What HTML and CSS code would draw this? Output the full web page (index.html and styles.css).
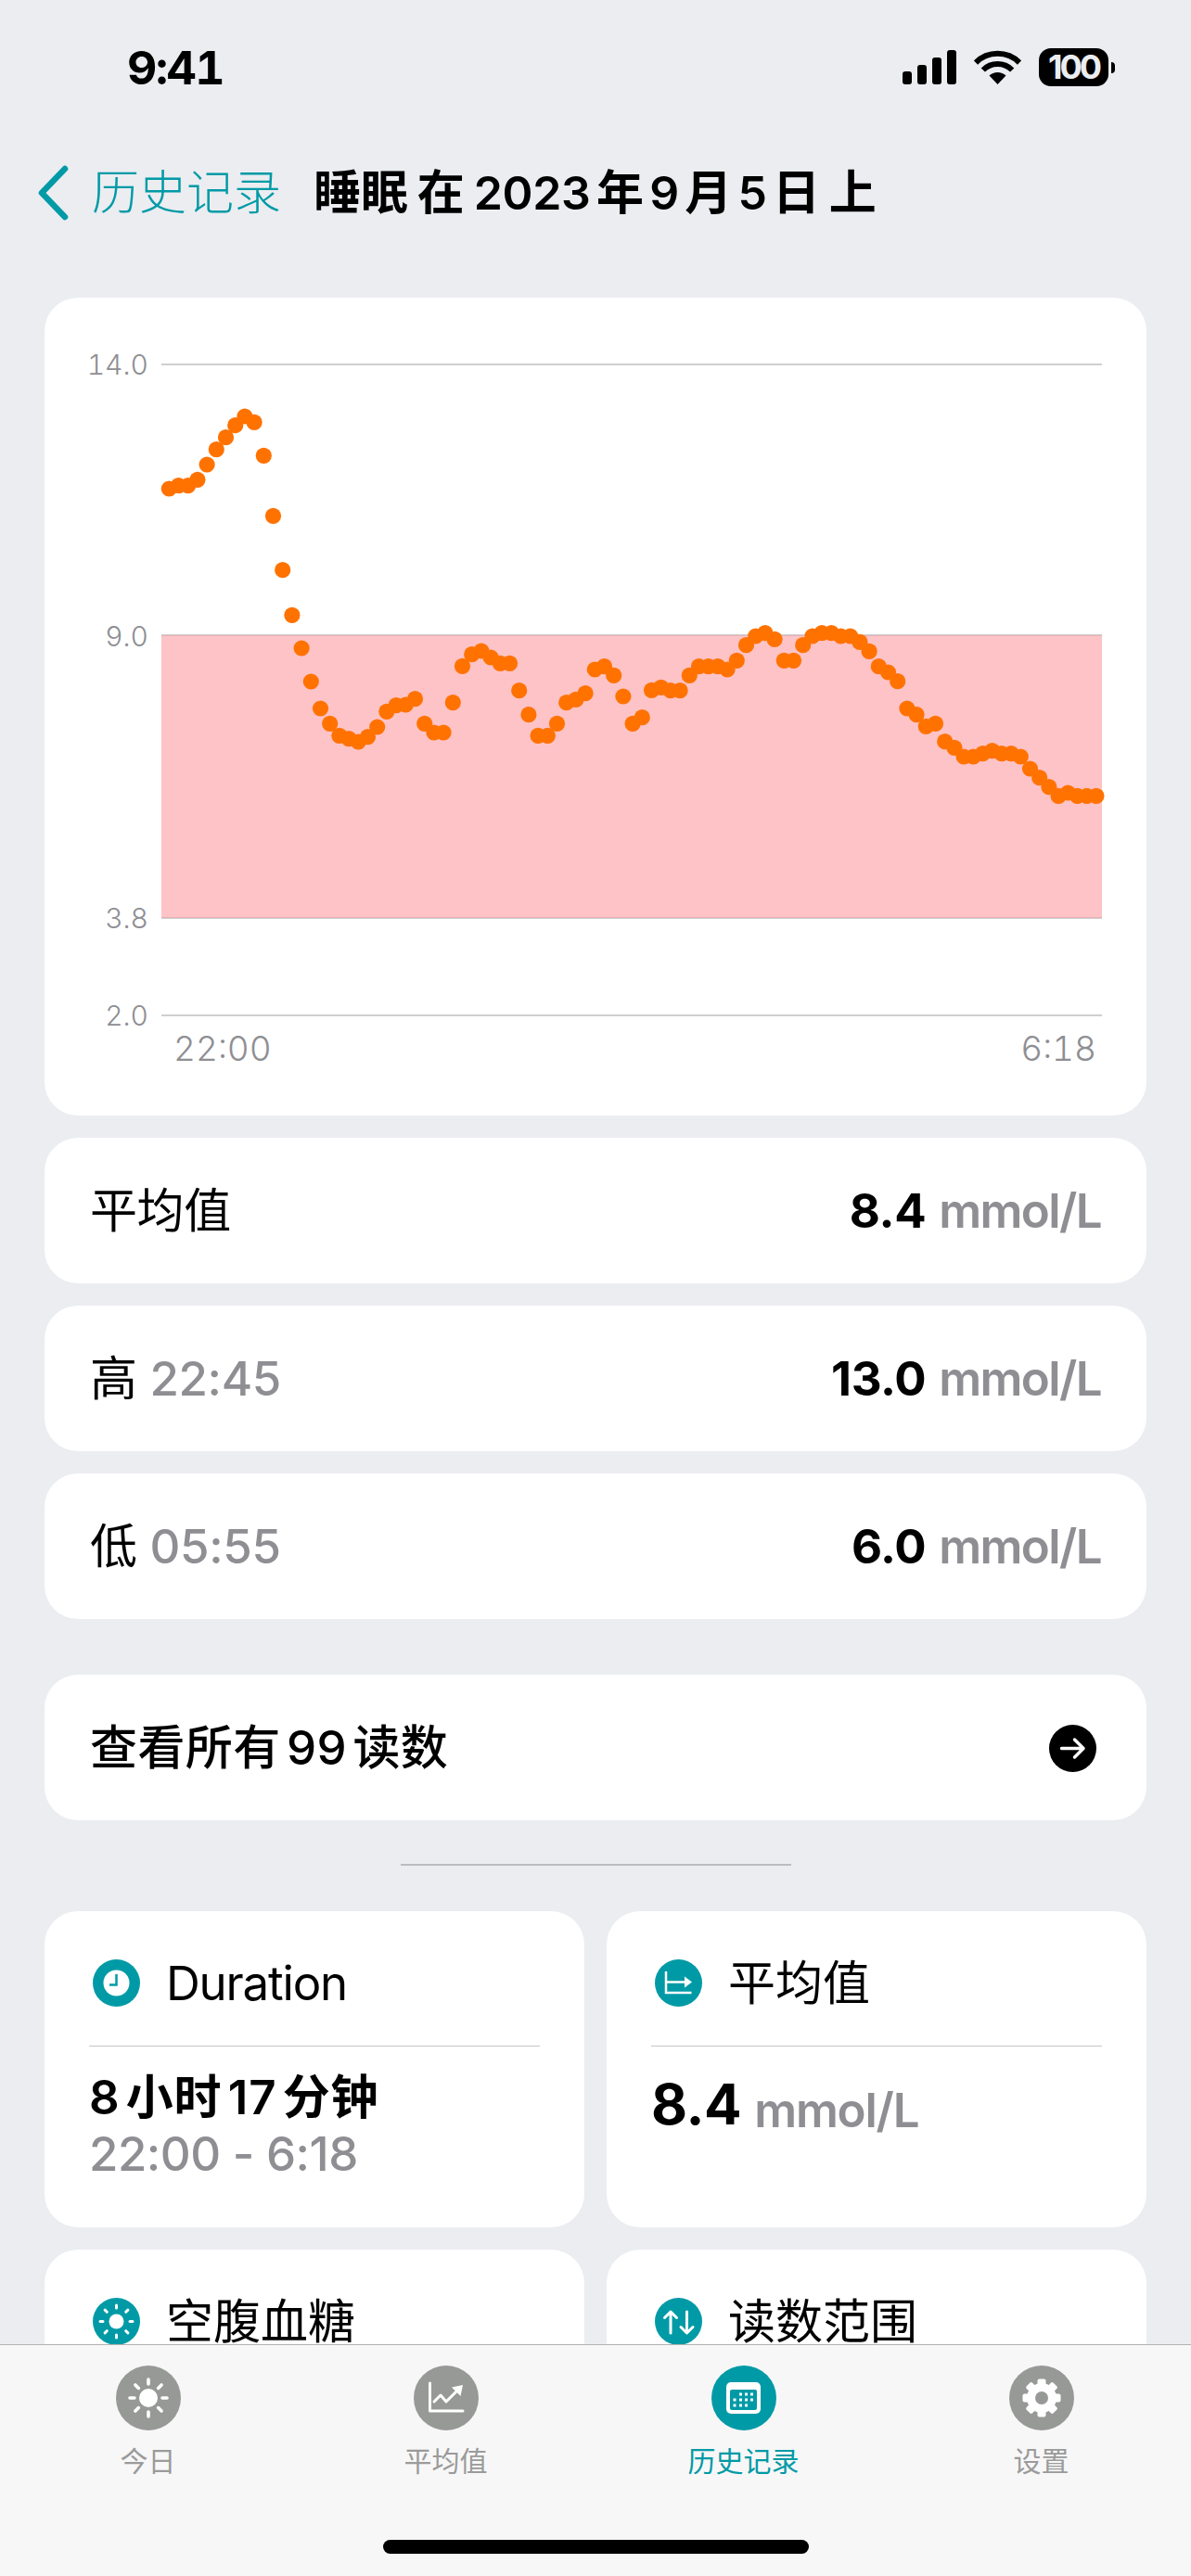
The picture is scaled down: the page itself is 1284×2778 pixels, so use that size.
FILE: index.html
```html
<!DOCTYPE html>
<html lang="zh">
<head>
<meta charset="utf-8">
<title>睡眠 历史记录</title>
<link rel="stylesheet" href="styles.css">
</head>
<body>
<div class="app">
  <div class="status">
    <span class="time">9:41</span>
    <div class="status-icons">
      <div class="signal"><i class="b1"></i><i class="b2"></i><i class="b3"></i><i class="b4"></i></div>
      <svg class="wifi" width="51" height="37" viewBox="0 0 51 37"><path class="wifi-arc" d="M2 13.5A33.5 33.5 0 0 1 49 13.5"/><path class="wifi-arc" d="M9.8 21.5A22.2 22.2 0 0 1 41.2 21.5"/><path class="wifi-fill" d="M25.5 37L16.5 27.5A13 13 0 0 1 34.5 27.5Z"/></svg>
      <div class="battery"><span class="battery-body">100</span><i class="battery-cap"></i></div>
    </div>
  </div>

  <header class="nav">
    <svg class="chevron" width="36" height="60" viewBox="0 0 36 60"><path d="M32 4L7 30L32 56"/></svg>
    <span class="back">历史记录</span>
    <span class="title">睡眠 在 <span class="num">2023</span>年<span class="num">9</span>月<span class="num">5</span>日 上</span>
  </header>

  <main class="content">
    <section class="card chart-card">
      <svg class="chart" width="1188" height="882" viewBox="0 0 1188 882">
        <text class="tick" x="112" y="83">14.0</text>
        <text class="tick" x="112" y="376">9.0</text>
        <text class="tick" x="112" y="680">3.8</text>
        <text class="tick" x="112" y="785">2.0</text>
        <text class="time-label" x="139" y="823">22:00</text>
        <text class="time-label end" x="1134" y="823">6:18</text>
        <g transform="translate(126 59)">
          <rect class="band" x="0" y="305" width="1014" height="305"/>
          <rect class="grid" x="0" y="12" width="1014" height="2"/>
          <rect class="grid" x="0" y="304" width="1014" height="1.5"/>
          <rect class="grid" x="0" y="609.5" width="1014" height="1.5"/>
          <rect class="grid" x="0" y="714" width="1014" height="2"/>
          <g class="dots">
            <circle cx="8.3" cy="147" r="8.3"/><circle cx="18.5" cy="143.7" r="8.3"/><circle cx="28.7" cy="143.7" r="8.3"/><circle cx="38.9" cy="137.3" r="8.3"/><circle cx="49.1" cy="121" r="8.3"/>
            <circle cx="59.3" cy="104.7" r="8.3"/><circle cx="69.5" cy="91.7" r="8.3"/><circle cx="79.7" cy="78.7" r="8.3"/><circle cx="89.9" cy="69" r="8.3"/><circle cx="100.1" cy="75.3" r="8.3"/>
            <circle cx="110.3" cy="111.3" r="8.3"/><circle cx="120.5" cy="176.3" r="8.3"/><circle cx="130.7" cy="234.7" r="8.3"/><circle cx="140.9" cy="283.3" r="8.3"/><circle cx="151.1" cy="319" r="8.3"/>
            <circle cx="161.3" cy="355" r="8.3"/><circle cx="171.5" cy="384" r="8.3"/><circle cx="181.7" cy="400.3" r="8.3"/><circle cx="191.9" cy="413.3" r="8.3"/><circle cx="202.1" cy="416.7" r="8.3"/>
            <circle cx="212.3" cy="420" r="8.3"/><circle cx="222.5" cy="414.7" r="8.3"/><circle cx="232.7" cy="404" r="8.3"/><circle cx="242.9" cy="387.3" r="8.3"/><circle cx="253.1" cy="380.7" r="8.3"/>
            <circle cx="263.3" cy="380" r="8.3"/><circle cx="273.5" cy="373.7" r="8.3"/><circle cx="283.7" cy="400.3" r="8.3"/><circle cx="293.9" cy="410" r="8.3"/><circle cx="304.1" cy="410" r="8.3"/>
            <circle cx="314.3" cy="377.7" r="8.3"/><circle cx="324.5" cy="338.3" r="8.3"/><circle cx="334.7" cy="325.7" r="8.3"/><circle cx="344.9" cy="322" r="8.3"/><circle cx="355.1" cy="329" r="8.3"/>
            <circle cx="365.3" cy="335.3" r="8.3"/><circle cx="375.5" cy="335.3" r="8.3"/><circle cx="385.7" cy="364.7" r="8.3"/><circle cx="395.9" cy="390.7" r="8.3"/><circle cx="406.1" cy="413.3" r="8.3"/>
            <circle cx="416.3" cy="413.3" r="8.3"/><circle cx="426.5" cy="400.3" r="8.3"/><circle cx="436.7" cy="377.7" r="8.3"/><circle cx="446.9" cy="374.3" r="8.3"/><circle cx="457.1" cy="367.7" r="8.3"/>
            <circle cx="467.3" cy="342" r="8.3"/><circle cx="477.5" cy="338.7" r="8.3"/><circle cx="487.7" cy="348.3" r="8.3"/><circle cx="497.9" cy="371" r="8.3"/><circle cx="508.1" cy="400.3" r="8.3"/>
            <circle cx="518.3" cy="393.7" r="8.3"/><circle cx="528.5" cy="364.3" r="8.3"/><circle cx="538.7" cy="361.3" r="8.3"/><circle cx="548.9" cy="364.7" r="8.3"/><circle cx="559.1" cy="364.7" r="8.3"/>
            <circle cx="569.3" cy="348.3" r="8.3"/><circle cx="579.5" cy="338.7" r="8.3"/><circle cx="589.7" cy="338.7" r="8.3"/><circle cx="599.9" cy="338.7" r="8.3"/><circle cx="610.1" cy="342" r="8.3"/>
            <circle cx="620.3" cy="332.3" r="8.3"/><circle cx="630.5" cy="315.7" r="8.3"/><circle cx="640.7" cy="306" r="8.3"/><circle cx="650.9" cy="302.7" r="8.3"/><circle cx="661.1" cy="309.3" r="8.3"/>
            <circle cx="671.3" cy="332.3" r="8.3"/><circle cx="681.5" cy="332.3" r="8.3"/><circle cx="691.7" cy="315.7" r="8.3"/><circle cx="701.9" cy="306" r="8.3"/><circle cx="712.1" cy="302.7" r="8.3"/>
            <circle cx="722.3" cy="302.7" r="8.3"/><circle cx="732.5" cy="306" r="8.3"/><circle cx="742.7" cy="306" r="8.3"/><circle cx="752.9" cy="312.3" r="8.3"/><circle cx="763.1" cy="322.3" r="8.3"/>
            <circle cx="773.3" cy="338.7" r="8.3"/><circle cx="783.5" cy="345" r="8.3"/><circle cx="793.7" cy="354.7" r="8.3"/><circle cx="803.9" cy="384" r="8.3"/><circle cx="814.1" cy="390.7" r="8.3"/>
            <circle cx="824.3" cy="403.3" r="8.3"/><circle cx="834.5" cy="400.3" r="8.3"/><circle cx="844.7" cy="419.7" r="8.3"/><circle cx="854.9" cy="426.3" r="8.3"/><circle cx="865.1" cy="436" r="8.3"/>
            <circle cx="875.3" cy="436" r="8.3"/><circle cx="885.5" cy="432.7" r="8.3"/><circle cx="895.7" cy="429.7" r="8.3"/><circle cx="905.9" cy="432.7" r="8.3"/><circle cx="916.1" cy="432.7" r="8.3"/>
            <circle cx="926.3" cy="436" r="8.3"/><circle cx="936.5" cy="449" r="8.3"/><circle cx="946.7" cy="458.7" r="8.3"/><circle cx="956.9" cy="468.7" r="8.3"/><circle cx="967.1" cy="478.3" r="8.3"/>
            <circle cx="977.3" cy="475" r="8.3"/><circle cx="987.5" cy="478.3" r="8.3"/><circle cx="997.7" cy="478.3" r="8.3"/><circle cx="1007.9" cy="478.3" r="8.3"/>
          </g>
        </g>
      </svg>
    </section>

    <div class="stats">
      <div class="card row"><span>平均值</span><span class="value"><b>8.4</b> <em>mmol/L</em></span></div>
      <div class="card row"><span>高 <em>22:45</em></span><span class="value"><b>13.0</b> <em>mmol/L</em></span></div>
      <div class="card row"><span>低 <em>05:55</em></span><span class="value"><b>6.0</b> <em>mmol/L</em></span></div>
    </div>

    <div class="card row link-row">
      <span class="link-text">查看所有99读数</span>
      <svg class="icon" width="51" height="51" viewBox="0 0 51 51"><circle class="black" cx="25.5" cy="25.5" r="25.5"/><path class="stroke-w arrow-s" d="M13.5 25.5H37M27.5 16L37 25.5L27.5 35"/></svg>
    </div>

    <div class="rule"></div>

    <div class="tiles">
      <article class="card tile">
        <div class="tile-head">
          <svg class="icon" width="51" height="51" viewBox="0 0 51 51"><circle class="teal" cx="25.5" cy="25.5" r="25.5"/><circle class="white" cx="25.5" cy="25.5" r="14"/><path class="stroke-t thin" d="M25.5 16V27.5H18"/></svg>
          <span class="latin">Duration</span>
        </div>
        <div class="tile-body">
          <div class="big-line">8小时17分钟</div>
          <div class="sub-line">22:00 - 6:18</div>
        </div>
      </article>
      <article class="card tile">
        <div class="tile-head">
          <svg class="icon" width="51" height="51" viewBox="0 0 51 51"><circle class="teal" cx="25.5" cy="25.5" r="25.5"/><path class="stroke-w thin" d="M12 13V36H39.5M12 24.5H33"/><path class="white" d="M32 18.5L40 24.5L32 30.5Z"/></svg>
          <span>平均值</span>
        </div>
        <div class="tile-body">
          <div class="avg-line"><b>8.4</b> <em>mmol/L</em></div>
        </div>
      </article>
      <article class="card tile">
        <div class="tile-head">
          <svg class="icon" width="51" height="51" viewBox="0 0 51 51"><circle class="teal" cx="25.5" cy="25.5" r="25.5"/><circle class="white" cx="25.5" cy="25.5" r="8"/><path class="stroke-w rays" d="M25.5 8V11M25.5 40V43M8 25.5H11M40 25.5H43M13.1 13.1L15.3 15.3M35.7 35.7L37.9 37.9M37.9 13.1L35.7 15.3M15.3 35.7L13.1 37.9"/></svg>
          <span>空腹血糖</span>
        </div>
      </article>
      <article class="card tile">
        <div class="tile-head">
          <svg class="icon" width="51" height="51" viewBox="0 0 51 51"><circle class="teal" cx="25.5" cy="25.5" r="25.5"/><path class="stroke-w updown" d="M17 38V15M10.5 21.5L17 15L23.5 21.5M34.5 15V38M28 31.5L34.5 38L41 31.5"/></svg>
          <span>读数范围</span>
        </div>
      </article>
    </div>
  </main>

  <nav class="tabbar">
    <div class="tab">
      <svg width="70" height="70" viewBox="0 0 70 70"><circle class="gray" cx="35" cy="35" r="35"/><circle class="white" cx="35" cy="35" r="10"/><path class="stroke-w tab-rays" d="M35 15V20M35 50V55M15 35H20M50 35H55M20.9 20.9L24.4 24.4M45.6 45.6L49.1 49.1M49.1 20.9L45.6 24.4M24.4 45.6L20.9 49.1"/></svg>
      <span>今日</span>
    </div>
    <div class="tab">
      <svg width="70" height="70" viewBox="0 0 70 70"><circle class="gray" cx="35" cy="35" r="35"/><path class="stroke-w thick" d="M17.5 19V49H53"/><path class="stroke-w thick" d="M22 39L29 32L35 39L46 28"/><path class="white" d="M41 23.5L53 21L50.5 33Z"/></svg>
      <span>平均值</span>
    </div>
    <div class="tab active">
      <svg width="70" height="70" viewBox="0 0 70 70"><circle class="teal" cx="35" cy="35" r="35"/><rect class="white" x="16" y="18" width="37" height="34" rx="5"/><rect class="teal" x="20" y="26" width="29" height="22" rx="2"/><g class="white"><rect x="30" y="29.5" width="3" height="3"/><rect x="36" y="29.5" width="3" height="3"/><rect x="42" y="29.5" width="3" height="3"/><rect x="23.5" y="35.5" width="3" height="3"/><rect x="30" y="35.5" width="3" height="3"/><rect x="36" y="35.5" width="3" height="3"/><rect x="42" y="35.5" width="3" height="3"/><rect x="23.5" y="41.5" width="3" height="3"/><rect x="30" y="41.5" width="3" height="3"/><rect x="36" y="41.5" width="3" height="3"/></g></svg>
      <span>历史记录</span>
    </div>
    <div class="tab">
      <svg width="70" height="70" viewBox="0 0 70 70"><circle class="gray" cx="35" cy="35" r="35"/><g class="white"><circle cx="35" cy="35" r="16"/><rect x="30.5" y="14.5" width="9" height="10" rx="2"/><rect x="30.5" y="14.5" width="9" height="10" rx="2" transform="rotate(45 35 35)"/><rect x="30.5" y="14.5" width="9" height="10" rx="2" transform="rotate(90 35 35)"/><rect x="30.5" y="14.5" width="9" height="10" rx="2" transform="rotate(135 35 35)"/><rect x="30.5" y="14.5" width="9" height="10" rx="2" transform="rotate(180 35 35)"/><rect x="30.5" y="14.5" width="9" height="10" rx="2" transform="rotate(225 35 35)"/><rect x="30.5" y="14.5" width="9" height="10" rx="2" transform="rotate(270 35 35)"/><rect x="30.5" y="14.5" width="9" height="10" rx="2" transform="rotate(315 35 35)"/></g><circle class="gray" cx="35" cy="35" r="7"/></svg>
      <span>设置</span>
    </div>
    <div class="home"></div>
  </nav>
</div>
</body>
</html>
```

FILE: styles.css
```css
* { box-sizing: border-box; }
html, body { margin: 0; padding: 0; }
body {
  background: #ebedf1;
  color: #000;
  font-family: Inter, "Noto Sans CJK SC", sans-serif;
  font-size: 51px;
  text-autospace: normal;
}
em { font-style: normal; }

.app { position: relative; width: 1284px; height: 2778px; overflow: hidden; }

/* status bar */
.status { height: 144px; padding: 52px 82px 0 137px; display: flex; justify-content: space-between; align-items: flex-start; }
.time { font-size: 50px; font-weight: 700; line-height: 42px; letter-spacing: -1.6px; font-variant-numeric: tabular-nums; }
.status-icons { display: flex; align-items: flex-start; }
.signal { display: flex; align-items: flex-end; gap: 6px; height: 37px; margin-top: 2px; }
.signal i { display: block; width: 10px; background: #000; border-radius: 3px; }
.signal .b1 { height: 14px; }
.signal .b2 { height: 21px; }
.signal .b3 { height: 29px; }
.signal .b4 { height: 37px; }
.wifi { margin: 2px 0 0 19px; }
.wifi-arc { fill: none; stroke: #000; stroke-width: 6; }
.wifi-fill { fill: #000; }
.battery { display: flex; align-items: center; margin-left: 19px; height: 41px; }
.battery-body { width: 75px; height: 41px; background: #000; color: #ebedf1; border-radius: 13px; font-size: 36px; font-weight: 700; line-height: 41px; text-align: center; letter-spacing: -3px; }
.battery-cap { display: block; width: 4px; height: 12px; margin-left: 3px; background: #000; border-radius: 0 6px 6px 0; }

/* nav */
.nav { height: 177px; display: flex; align-items: center; padding: 0 0 50px 38px; }
.chevron { flex: none; }
.chevron path { fill: none; stroke: #009aa6; stroke-width: 6.5; stroke-linecap: round; stroke-linejoin: round; }
.back { color: #009aa6; font-weight: 300; margin-left: 25px; line-height: 60px; }
.title { font-weight: 600; margin-left: 35px; line-height: 60px; word-spacing: -3px; }
.num { font-size: 50px; letter-spacing: -0.3px; }

/* content */
.content { padding: 0 48px; }
.card { background: #fff; border-radius: 36px; }
.chart-card { height: 882px; }
.chart { display: block; }
.tick { fill: #8e8e93; font-size: 30px; font-weight: 300; text-anchor: end; font-variant-numeric: tabular-nums; }
.time-label { fill: #8e8e93; font-size: 37px; font-weight: 300; font-variant-numeric: tabular-nums; }
.time-label.end { text-anchor: end; }
.band { fill: #fec3c7; }
.grid { fill: #000; fill-opacity: 0.19; }
.dots { fill: #ff7200; }
.dots circle { r: 8.6px; }

.stats { display: flex; flex-direction: column; gap: 24.5px; margin-top: 24px; }
.row { height: 156.5px; padding: 2px 49px 0; display: flex; justify-content: space-between; align-items: center; letter-spacing: -0.4px; line-height: 60px; }
.row em { color: #8e8e93; font-weight: 500; }
.value b { font-weight: 700; }
.value em { font-weight: 600; letter-spacing: -1.6px; }
.link-row { height: 157px; margin-top: 60px; padding-right: 54px; }
.link-text { font-weight: 500; letter-spacing: 0.4px; }
.icon { display: block; flex: none; }

.rule { height: 1.5px; width: 421px; margin: 47.5px auto 49.5px; background: #bcbcc0; }

.tiles { display: grid; grid-template-columns: 582px 582px; gap: 24px; }
.tile { height: 341px; padding: 52px 48px 0; }
.tile-head { display: flex; align-items: center; gap: 28px; height: 51px; padding-left: 4px; line-height: 60px; }
.latin { letter-spacing: -1.2px; }
.tile-body { margin-top: 42px; border-top: 1.5px solid #c6c6c8; padding-top: 25px; }
.big-line { font-weight: 600; line-height: 60px; letter-spacing: 0.8px; }
.sub-line { color: #8e8e93; font-weight: 500; line-height: 62px; letter-spacing: -0.5px; }
.avg-line { line-height: 80px; margin-top: -3px; letter-spacing: -0.4px; }
.avg-line b { font-size: 60px; font-weight: 700; }
.avg-line em { color: #8e8e93; font-weight: 600; letter-spacing: -1.2px; vertical-align: -3px; }

/* icon fills */
.teal { fill: #009aa6; }
.gray { fill: #979997; }
.black { fill: #000; }
.white { fill: #fff; }
.stroke-w { fill: none; stroke: #fff; stroke-linecap: round; stroke-linejoin: round; }
.stroke-t { fill: none; stroke: #009aa6; stroke-linecap: butt; }
.arrow-s { stroke-width: 3.5; }
.thin { stroke-width: 2.5; }
.thin.stroke-w { stroke-linecap: butt; stroke-linejoin: miter; }
.rays { stroke-width: 3; }
.updown { stroke-width: 3; }
.tab-rays { stroke-width: 3.6; }
.thick { stroke-width: 3; }

/* tab bar */
.tabbar {
  position: absolute; left: 0; right: 0; bottom: 0; height: 250px;
  display: grid; grid-template-columns: repeat(4, 1fr);
  align-items: start;
  background: #f7f7f7; border-top: 1.5px solid #b2b2b2;
  padding-top: 21.5px;
}
.tab { display: flex; flex-direction: column; align-items: center; padding-right: 2px; color: #9a9b9a; font-size: 30px; }
.tab svg { display: block; }
.tab span { margin-top: 13px; line-height: 40px; }
.tab.active { color: #009aa6; }
.home { position: absolute; left: 413px; bottom: 24px; width: 459px; height: 15px; background: #000; border-radius: 8px; }
```
